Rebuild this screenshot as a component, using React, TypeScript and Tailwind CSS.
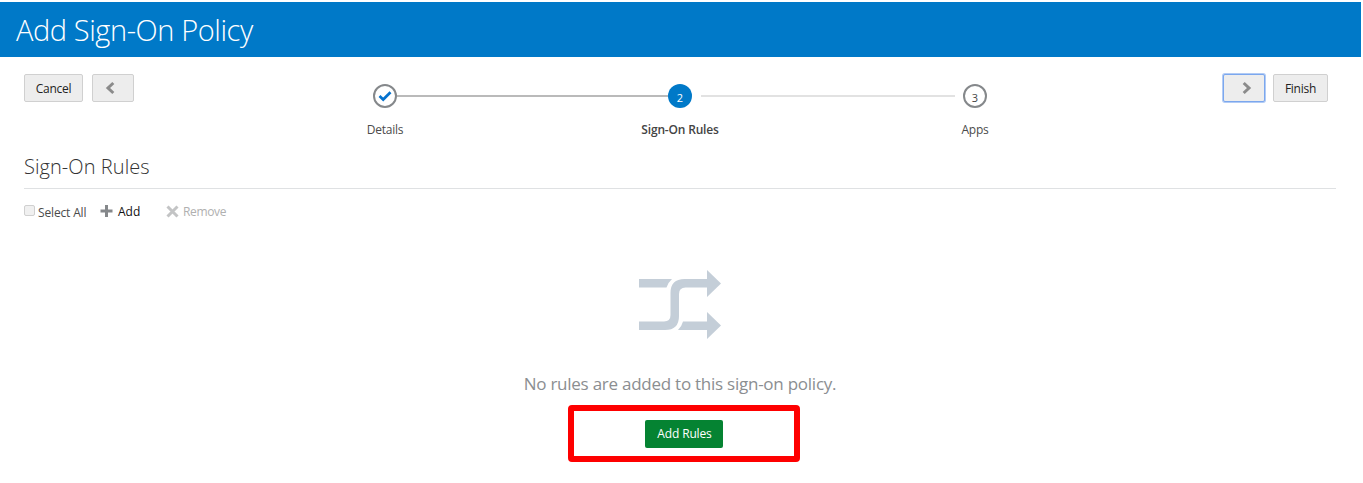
import React from 'react';

const buttonBase =
  'flex h-[28px] items-center rounded-[2px] border border-[#d0d0d0] bg-[#ededed] text-[12px] leading-none text-[#222]';

function Chevron({ flip = false }: { flip?: boolean }) {
  return (
    <svg width="10" height="14" viewBox="0 0 10 14" className={flip ? 'rotate-180' : ''} aria-hidden="true">
      <path d="M8.300 2 3 7l5.300 5" fill="none" stroke="#8b8b8b" strokeWidth="3" />
    </svg>
  );
}

function Step({ label, active, children }: { label: string; active?: boolean; children: React.ReactNode }) {
  return (
    <div className="flex w-6 flex-col items-center">
      <div
        className={
          active
            ? 'flex size-6 items-center justify-center rounded-full bg-[#0079c8] text-[11px] leading-none text-white'
            : 'flex size-6 items-center justify-center rounded-full border-2 border-[#85888b] bg-white text-[11px] leading-none text-[#444]'
        }
      >
        {children}
      </div>
      <span
        className={
          active
            ? 'mt-[14px] whitespace-nowrap text-[12px] leading-4 font-semibold tracking-[-0.18px] text-[#444]'
            : 'mt-[14px] whitespace-nowrap text-[12px] leading-4 tracking-[-0.25px] text-[#4b4b4b]'
        }
      >
        {label}
      </span>
    </div>
  );
}

export default function App() {
  return (
    <div className="flex h-[483px] w-[1363px] flex-col overflow-hidden bg-white pt-[2px] font-['Open_Sans','Noto_Sans',sans-serif] text-[#333]">
      <header className="flex h-[55px] w-[1361px] shrink-0 items-center bg-[#0079c8] pl-4">
        <h1 className="text-[29px] leading-[40px] font-light tracking-[-0.42px] whitespace-nowrap text-white">Add Sign-On Policy</h1>
      </header>

      <nav className="flex h-[88px] shrink-0 items-start pt-[17px] pl-6">
        <button className={`${buttonBase} w-[59px] justify-center pt-px tracking-[-0.25px]`}>Cancel</button>
        <button aria-label="Previous" className={`${buttonBase} ml-[9px] w-[42px] pl-[12px]`}>
          <Chevron />
        </button>
        <div className="mt-[10px] ml-[239px] flex items-start">
          <Step label="Details">
            <svg width="14" height="12" viewBox="0 0 14 12" aria-hidden="true">
              <path d="m1.500 6 3.700 3.500 7.300-7.200" fill="none" stroke="#0572ce" strokeWidth="2.700" />
            </svg>
          </Step>
          <div className="mt-[11px] h-[2px] w-[271px] bg-[#bababa]" />
          <Step label="Sign-On Rules" active>
            <span className="pt-[2px]">2</span>
          </Step>
          <div className="mt-[11px] mr-[8px] ml-[9px] h-[2px] w-[254px] bg-[#e2e2e2]" />
          <Step label="Apps">
            <span className="pt-[2px]">3</span>
          </Step>
        </div>
        <button aria-label="Next" className="ml-[236px] flex h-[28px] w-[42px] items-center rounded-[2px] border border-[#7ba7ee] bg-[#ededed] pl-[18px] shadow-[0_0_0_1px_#b1cbf5]">
          <Chevron flip />
        </button>
        <button className={`${buttonBase} ml-[8px] w-[55px] justify-center pt-px tracking-[-0.25px]`}>Finish</button>
      </nav>

      <main className="flex grow flex-col pl-6">
        <div className="flex h-[44px] w-[1312px] shrink-0 items-center border-b border-[#dfe1e3] pt-px">
          <h2 className="text-[20px] leading-7 font-light tracking-[0.06px] whitespace-nowrap text-[#333]">Sign-On Rules</h2>
        </div>

        <div className="flex h-[45px] shrink-0 items-center text-[12px] leading-4 whitespace-nowrap">
          <span className="mb-[2px] size-[11px] rounded-[2px] border border-[#d0d0d0] bg-[#f0f0f0]" />
          <span className="ml-[3px] w-[49px] pt-[2px] tracking-[-0.15px] text-[#4b4b4b]">Select All</span>
          <svg className="ml-[13px]" width="13" height="13" viewBox="0 0 13 13" aria-hidden="true">
            <path d="M6.500 0v12M.500 6h12" fill="none" stroke="#85888b" strokeWidth="3" />
          </svg>
          <span className="ml-[5px] w-[22px] text-[#111]">Add</span>
          <svg className="ml-[26px]" width="13" height="13" viewBox="0 0 13 13" aria-hidden="true">
            <path d="m1.500 1.500 10 10m0-10-10 10" fill="none" stroke="#c3c4c5" strokeWidth="3" />
          </svg>
          <span className="ml-[4px] tracking-[-0.35px] text-[#b0b0b0]">Remove</span>
        </div>

        <section className="ml-[544px] flex w-[232px] flex-col items-center pt-[36px]">
          <svg className="mr-[8px] shrink-0" width="84" height="70" viewBox="0 0 84 70" fill="#c4ced8" aria-hidden="true">
            <path d="M1 9h33q-3.500 3-5.500 8.500H1zM45 51.500h24V42l14 13.500L69 69v-9H40q3.500-3 5-8.500Z" />
            <path d="M1 51.500h25q6.500 0 6.500-6.500V23Q32.500 9 46.500 9H69V0l14 13.500L69 27v-9.500H47.500q-6.500 0-6.500 6.500v22Q41 60 27 60H1Z" />
          </svg>
          <p className="mt-[32px] mr-[8px] text-[17px] leading-6 tracking-[-0.25px] whitespace-nowrap text-[#8b8e91]">
            No rules are added to this sign-on policy.
          </p>
          <div className="mt-[9px] flex h-[57px] w-[232px] items-center justify-center rounded-[4px] border-6 border-[#fe0000]">
            <button className="flex h-[28px] w-[78px] items-center justify-center rounded-[2px] bg-[#058332] pl-px text-[12px] leading-none tracking-[-0.15px] text-white">
              Add Rules
            </button>
          </div>
        </section>
      </main>
    </div>
  );
}
